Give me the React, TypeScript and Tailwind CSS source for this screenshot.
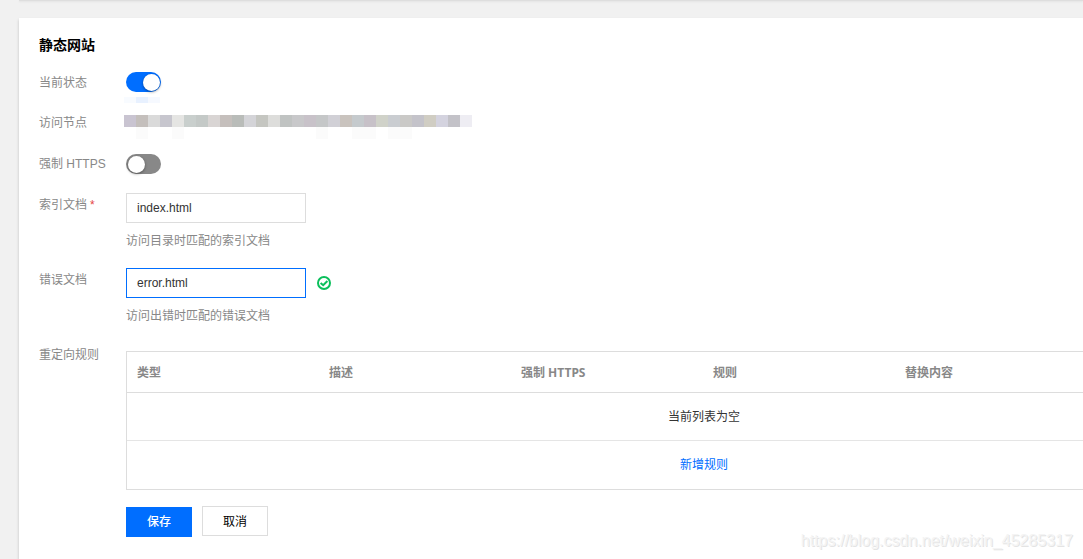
import { useState } from 'react';
import type { ReactNode } from 'react';

const columns = ['类型', '描述', '强制 HTTPS', '规则', '替换内容', ''];

// masked endpoint address, one colour per block
const maskBlocks = [
  '#c9c4d1', '#c4bfbc', '#dadada', '#c7c6ce', '#e5e5e3', '#c9cfcd', '#c4c9c7', '#d9d5d4',
  '#c5bfbc', '#b9bcb9', '#d4d4d8', '#c5c6c1', '#dddddb', '#c0c3c2', '#c8c8ca', '#c8c2c9',
  '#c5c7c8', '#d1d0d6', '#c9c3be', '#c5cacd', '#c7c1c8', '#d0d2c9', '#cacdd1', '#cac9c7',
  '#c4c3ca', '#d0cdc3', '#d4d3df', '#c3c2c8', '#eeedf3',
];
const faintBlocks = [1, 4, 16, 19, 20, 22, 23];

const Row = ({ label, required, className, labelClass = '', children }: {
  label: string;
  required?: boolean;
  className: string;
  labelClass?: string;
  children: ReactNode;
}) => (
  <div className={`flex items-start ${className}`}>
    <div className={`w-[87px] shrink-0 text-[#888] whitespace-nowrap ${labelClass}`}>
      {label}
      {required && <span className="text-[#e54545] ml-[3px]">*</span>}
    </div>
    {children}
  </div>
);

const Toggle = ({ on, onClick }: { on: boolean; onClick: () => void }) => (
  <button
    className={`flex items-center w-[35px] h-5 rounded-full px-[1.5px] ${
      on ? 'bg-[#006eff] justify-end' : 'bg-[#888] justify-start'
    }`}
    onClick={onClick}
  >
    <span className="w-[17px] h-[17px] rounded-full bg-white shadow-[0_1px_3px_rgba(0,0,0,0.4)]"></span>
  </button>
);

const Mask = () => (
  <div className="-ml-[2px] mt-[3px]">
    <div className="flex">
      {maskBlocks.map((color, i) => (
        <span key={i} className="w-3 h-3" style={{ backgroundColor: color }}></span>
      ))}
    </div>
    <div className="flex">
      {maskBlocks.map((_, i) => (
        <span key={i} className={`w-3 h-3 ${faintBlocks.includes(i) ? 'bg-[#fbfbfb]' : ''}`}></span>
      ))}
    </div>
  </div>
);

const App = () => {
  const [enabled, setEnabled] = useState(true);
  const [https, setHttps] = useState(false);
  const [indexDoc, setIndexDoc] = useState('index.html');
  const [errorDoc, setErrorDoc] = useState('error.html');

  return (
    <div className="relative flex flex-col w-full h-[559px] overflow-hidden bg-[#f1f1f1] pl-[19px] text-xs leading-5 font-['Liberation_Sans','Noto_Sans_CJK_SC',sans-serif]">
      <div className="h-px shrink-0 bg-[#dedede] shadow-[0_1px_2px_rgba(0,0,0,0.08)]"></div>

      <div className="mt-[17px] grow shrink-0 bg-white pl-5 pt-[17px] shadow-[0_2px_3px_rgba(0,0,0,0.2)]">
        <h3 className="text-sm leading-5 font-bold text-black">静态网站</h3>

        <Row label="当前状态" className="mt-[17px] h-10" labelClass="pt-px">
          <div>
            <Toggle on={enabled} onClick={() => setEnabled(!enabled)} />
            <div className="flex -ml-[2px] mt-[5px]">
              <span className="w-3 h-1.5 bg-[#f8fbff]"></span>
              <span className="w-3 h-1.5 bg-[#e8f1ff]"></span>
              <span className="w-3 h-1.5 bg-[#f6f9ff]"></span>
            </div>
          </div>
        </Row>

        <Row label="访问节点" className="h-[42px]" labelClass="pt-px">
          <Mask />
        </Row>

        <Row label="强制 HTTPS" className="h-[41px]">
          <Toggle on={https} onClick={() => setHttps(!https)} />
        </Row>

        <Row label="索引文档" required className="h-[75px]">
          <div className="-mt-[2px]">
            <input
              className="block w-[180px] h-[30px] border border-[#ddd] px-2.5 text-[#333] outline-none"
              value={indexDoc}
              onChange={(e) => setIndexDoc(e.target.value)}
            />
            <p className="mt-2 text-[#888]">访问目录时匹配的索引文档</p>
          </div>
        </Row>

        <Row label="错误文档" className="h-[75px]">
          <div className="-mt-[2px]">
            <div className="flex items-center">
              <input
                className="block w-[180px] h-[30px] border border-[#006eff] px-2.5 text-[#333] outline-none"
                value={errorDoc}
                onChange={(e) => setErrorDoc(e.target.value)}
              />
              <svg className="ml-[11px]" width="14" height="14" viewBox="0 0 14 14" fill="none" stroke="#0abf5b" strokeWidth="2">
                <circle cx="7" cy="7" r="6" />
                <path d="M3.6 6.9 6.2 9.2 10.4 5" />
              </svg>
            </div>
            <p className="mt-2 text-[#888]">访问出错时匹配的错误文档</p>
          </div>
        </Row>

        <Row label="重定向规则" className="">
          <div className="mt-[6px] w-[1156px] shrink-0 border border-[#ddd]">
            <div className="flex h-[41px] items-center border-b border-[#ddd] pt-[2px] font-bold text-[#888] font-['Noto_Sans','Noto_Sans_CJK_SC',sans-serif]">
              {columns.map((name, i) => (
                <div key={i} className="w-48 pl-2.5">{name}</div>
              ))}
            </div>
            <div className="flex h-12 items-center justify-center border-b border-[#e5e5e5] text-[#333]">
              当前列表为空
            </div>
            <div className="flex h-12 items-center justify-center">
              <a href="#" className="text-[#006eff]">新增规则</a>
            </div>
          </div>
        </Row>

        <div className="flex ml-[87px] mt-4">
          <button className="mt-px w-[66px] h-[30px] bg-[#006eff] font-medium text-white">保存</button>
          <button className="ml-2.5 w-[66px] h-[30px] border border-[#ddd] bg-white pt-[2px] text-black">取消</button>
        </div>
      </div>

      <span className="absolute right-[10px] bottom-2 text-base leading-5 text-[#f4f4f4] [text-shadow:1px_1px_0_#e4e4e4]">
        https://blog.csdn.net/weixin_45285317
      </span>
    </div>
  );
};

export default App;
